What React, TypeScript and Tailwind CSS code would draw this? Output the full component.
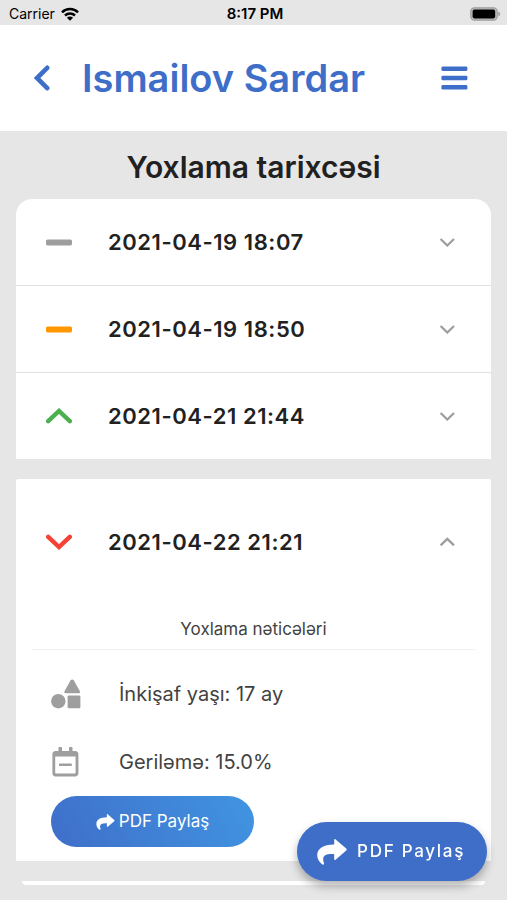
import { useState } from "react";

type Trend = "none" | "same" | "up" | "down";

const HISTORY: { date: string; trend: Trend }[] = [
  { date: "2021-04-19 18:07", trend: "none" },
  { date: "2021-04-19 18:50", trend: "same" },
  { date: "2021-04-21 21:44", trend: "up" },
];

function TrendIcon({ trend }: { trend: Trend }) {
  if (trend === "up" || trend === "down") {
    return (
      <svg
        viewBox="0 0 26 16"
        className={`w-[26px] h-4 shrink-0 ${trend === "up" ? "text-[#4caf50]" : "text-[#f44336]"}`}
        fill="none"
        stroke="currentColor"
        strokeWidth="4.4"
      >
        <path
          d={trend === "up" ? "M2.2 13.2L13 3L23.8 13.2" : "M2.2 2.8L13 13L23.8 2.8"}
          strokeLinecap="round"
        />
      </svg>
    );
  }
  return (
    <svg
      viewBox="0 0 26 16"
      className={`w-[26px] h-4 shrink-0 ${trend === "none" ? "text-[#9e9e9e]" : "text-[#ff9800]"}`}
      fill="currentColor"
    >
      <rect x="0" y="5.4" width="26" height="6" rx="1.6" />
    </svg>
  );
}

function Caret({ open }: { open: boolean }) {
  return (
    <svg viewBox="0 0 16 10" className="w-4 h-[10px] shrink-0 text-[#9e9e9e]" fill="none" stroke="currentColor" strokeWidth="2.3">
      <path d={open ? "M1.6 8.4L8.3 1.9L15 8.4" : "M1.6 2L8.3 8.5L15 2"} />
    </svg>
  );
}

function ShareIcon({ className }: { className: string }) {
  return (
    <svg viewBox="0 0 30 26" className={className} fill="currentColor">
      <path d="M17.2 .8C17.2 .1 18 -.1 18.6 .4L29.2 9.6C29.9 10.2 29.9 11 29.2 11.6L18.6 20.8C18 21.3 17.2 21 17.2 20.3V15.2C10.6 14.8 6.4 15.8 6.2 19.8C6.1 21.8 6.8 23.3 7 24.6C7.2 25.6 6.2 26 5.4 25.4C2 23.4 .1 19.6 .2 15.8C.4 9.6 6 5.6 17.2 5.4Z" />
    </svg>
  );
}

export default function App() {
  const [open, setOpen] = useState(true);

  return (
    <div className="min-h-screen bg-[#e6e6e6] font-['Inter',sans-serif] text-[#212121]">
      {/* Status bar */}
      <div className="grid grid-cols-3 items-center h-[25px] pl-[9px] pr-[6px] pt-[3px] text-black">
        <div className="flex items-center gap-[6px] text-sm">
          Carrier
          <svg viewBox="0 0 18 14" className="w-[18px] h-[14px]" fill="none" stroke="currentColor" strokeWidth="2.5">
            <path d="M1 5.3C5.4 .8 12.6 .8 17 5.3" />
            <path d="M4 8.5C6.8 5.8 11.2 5.8 14 8.5" />
            <path d="M9 13.8L5.9 10.7C7.7 9.1 10.3 9.1 12.1 10.7Z" fill="currentColor" stroke="none" />
          </svg>
        </div>
        <span className="text-center text-[15px] font-semibold">8:17 PM</span>
        <svg viewBox="0 0 31 14" className="w-[31px] h-[14px] justify-self-end">
          <rect x=".8" y=".8" width="26.4" height="12.4" rx="3.6" fill="#bdbdbd" stroke="#9e9e9e" strokeWidth="1.2" />
          <rect x="2.6" y="2.6" width="22.6" height="8.8" rx="1.8" fill="#000" />
          <path d="M28.4 4.6C30.8 5.4 30.8 8.6 28.4 9.4Z" fill="#9e9e9e" />
        </svg>
      </div>

      {/* Header */}
      <header className="flex items-center h-[106px] pl-[33px] pr-[39px] bg-white text-[#3f6ec9]">
        <button aria-label="Geri" className="shrink-0">
          <svg viewBox="0 0 17 26" className="w-[17px] h-[26px]" fill="none" stroke="currentColor" strokeWidth="4.6">
            <path d="M14.2 2.8L4 13L14.2 23.2" strokeLinecap="round" />
          </svg>
        </button>
        <h1 className="flex-1 pl-8 text-[38px] leading-10 font-semibold">Ismailov Sardar</h1>
        <button aria-label="Menyu" className="shrink-0">
          <svg viewBox="0 0 27 24" className="w-[27px] h-6" fill="currentColor">
            <rect x=".4" y=".4" width="26" height="4.6" rx="1.4" />
            <rect x=".4" y="9.7" width="26" height="4.6" rx="1.4" />
            <rect x=".4" y="19" width="26" height="4.6" rx="1.4" />
          </svg>
        </button>
      </header>

      <main className="px-4 pt-4">
        <h2 className="text-center text-[30px] leading-10 font-semibold">Yoxlama tarixcəsi</h2>

        <ul className="mt-3 rounded-t-2xl bg-white overflow-hidden divide-y divide-[#e0e0e0]">
          {HISTORY.map((item) => (
            <li key={item.date}>
              <button className="flex items-center w-full h-[86px] pl-[30px] pr-9 text-left">
                <TrendIcon trend={item.trend} />
                <span className="flex-1 pl-9 text-[22px] font-semibold tracking-wide">{item.date}</span>
                <Caret open={false} />
              </button>
            </li>
          ))}
        </ul>

        <section className="mt-5 bg-white rounded-t-xs">
          <button
            onClick={() => setOpen(!open)}
            aria-expanded={open}
            className="flex items-center w-full h-[126px] pl-[30px] pr-9 text-left"
          >
            <TrendIcon trend="down" />
            <span className="flex-1 pl-9 text-[22px] font-semibold tracking-wide">2021-04-22 21:21</span>
            <Caret open={open} />
          </button>

          {open && (
            <div className="px-4 pb-[14px]">
              <h3 className="pt-3 pb-2 text-center text-[17px] leading-6 text-[#424242] border-b border-[#f2f2f2]">
                Yoxlama nəticələri
              </h3>

              <div className="pt-[10px] pl-[19px] text-xl text-[#424242]">
                <div className="flex items-center h-[68px]">
                  <svg viewBox="0 0 30 30" className="w-[30px] h-[30px] text-[#9e9e9e]" fill="currentColor">
                    <path d="M19.7 1.2C20.4 .1 22 .1 22.7 1.2L28.9 12.2C29.4 13.2 28.9 14.2 27.8 14.2H14.6C13.5 14.2 13 13.2 13.5 12.2Z" />
                    <circle cx="7.3" cy="22.2" r="7.2" />
                    <rect x="16.6" y="16.6" width="12.8" height="12.6" rx="1.2" />
                  </svg>
                  <span className="pl-[38px]">İnkişaf yaşı: 17 ay</span>
                </div>
                <div className="flex items-center h-[68px]">
                  <svg viewBox="0 0 30 30" className="w-[30px] h-[30px] text-[#9e9e9e]" fill="currentColor">
                    <path
                      fillRule="evenodd"
                      d="M7.5 .8C7.5 .3 7.8 0 8.3 0H10.2C10.7 0 11 .3 11 .8V4H18V.8C18 .3 18.3 0 18.8 0H20.7C21.2 0 21.5 .3 21.5 .8V4H24.4C26 4 27.4 5.4 27.4 7V26.4C27.4 28 26 29.4 24.4 29.4H4.4C2.8 29.4 1.4 28 1.4 26.4V7C1.4 5.4 2.8 4 4.4 4H7.5ZM4.2 9.6V25.8C4.2 26.3 4.5 26.6 5 26.6H23.8C24.3 26.6 24.6 26.3 24.6 25.8V9.6Z"
                    />
                    <rect x="8" y="16.4" width="12.8" height="2.6" rx=".6" />
                  </svg>
                  <span className="pl-[38px]">Geriləmə: 15.0%</span>
                </div>
                <button className="flex items-center justify-center gap-1 w-[203px] h-[51px] rounded-full bg-linear-60 from-[#3f6ec9] to-[#4095e2] text-[17px] text-white">
                  <ShareIcon className="w-[19px] h-4" />
                  PDF Paylaş
                </button>
              </div>
            </div>
          )}
        </section>

        <div className="mt-5 mx-[6px] h-1 rounded-b-full bg-white" />
      </main>

      <button className="fixed right-5 bottom-[19px] flex items-center gap-[10px] h-[59px] pl-5 pr-[22px] rounded-full bg-[#3f6ec9] text-[17px] font-medium tracking-widest text-white shadow-[0_5px_10px_rgba(0,0,0,0.3)]">
        <ShareIcon className="w-[30px] h-[26px]" />
        PDF Paylaş
      </button>
    </div>
  );
}
